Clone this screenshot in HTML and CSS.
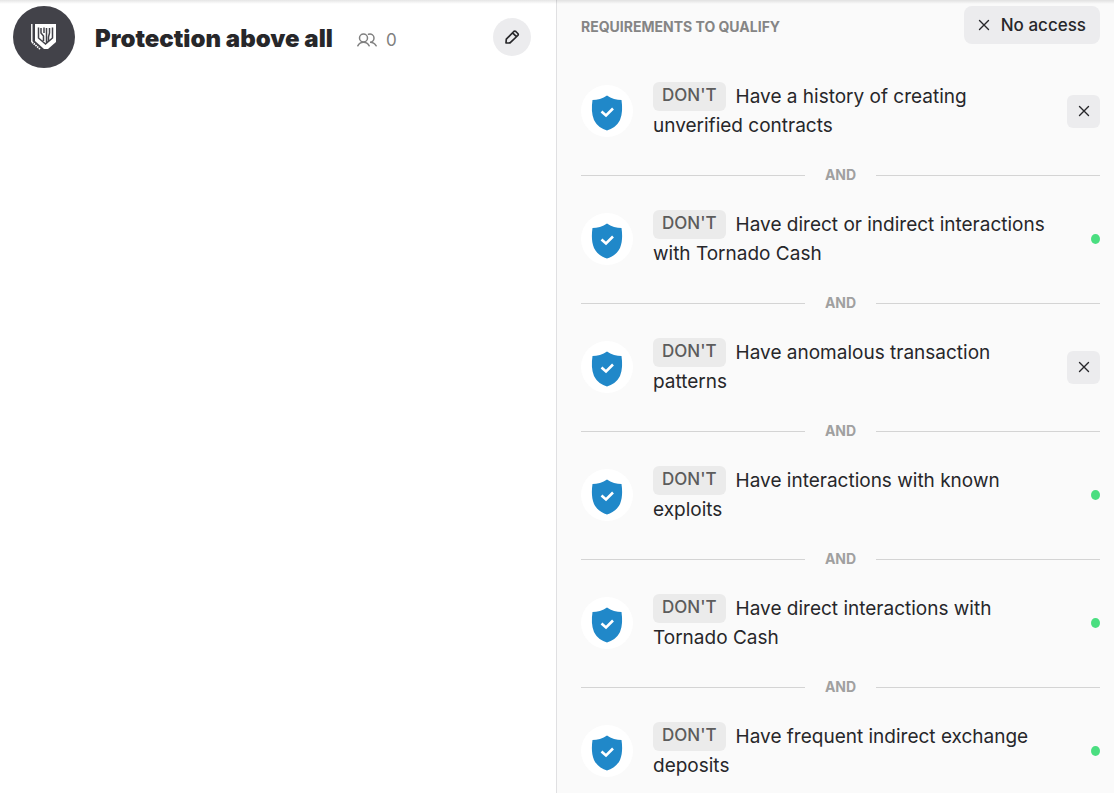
FILE: index.html
```html
<!DOCTYPE html>
<html lang="en">
<head>
  <meta charset="utf-8">
  <title>Protection above all</title>
  <link rel="stylesheet" href="styles.css">
</head>
<body>
  <!-- shared icons -->
  <svg class="sprite" aria-hidden="true">
    <symbol id="shield" viewBox="0 0 32 36">
      <path fill="#2088c9" d="M16 0.5 C20 3.5 26 5 30.5 5 C31.5 12 31.5 19 29 25 C26 31 21 34 16 35.5 C11 34 6 31 3 25 C0.5 19 0.5 12 1.5 5 C6 5 12 3.5 16 0.5 Z"/>
      <path fill="none" stroke="#fff" stroke-width="2.6" d="M10.5 16.5 L15 20.5 L22 13.5"/>
    </symbol>
    <symbol id="cross" viewBox="0 0 12 12">
      <path fill="none" stroke="currentColor" stroke-width="1.4" stroke-linecap="round" d="M1.5 1.5 L10.5 10.5 M10.5 1.5 L1.5 10.5"/>
    </symbol>
  </svg>

  <div class="page">
    <main class="role">
      <div class="logo">
        <svg width="26" height="26" viewBox="0 0 26 26" aria-hidden="true">
          <path fill="#fff" d="M4 0 H25 V18 L17 25 H13 L4 17 Z"/>
          <path fill="none" stroke="#fff" stroke-width="1.4" d="M0.8 0 V18"/>
          <path fill="none" stroke="#fff" stroke-width="1.8" stroke-dasharray="1.5 0.8" d="M1 18 L9 25"/>
          <path fill="none" stroke="#424249" stroke-width="0.8" d="M3 0 V18 L11 25"/>
          <path fill="none" stroke="#424249" stroke-width="1.5" d="M7.5 3.5 V14 L14.5 20 L21.5 14 V3.5 M10 4 V9 L12.5 12 V17 M13 3.5 V9 M15.5 4 V19 M18.5 4 V9 L17.5 13 V17"/>
        </svg>
      </div>
      <h1>Protection above all</h1>
      <div class="members">
        <svg width="20" height="14" viewBox="0 0 20 14" fill="none" stroke="currentColor" stroke-width="1.5" stroke-linecap="round" aria-hidden="true">
          <circle cx="6.5" cy="5" r="4"/>
          <path d="M0.8 12.8 C2 10.5 4 9.2 6.5 9.2 C9 9.2 11 10.5 12.2 12.8"/>
          <path d="M11.5 1.3 C14.5 0.3 17 2.3 17 5 C17 7.3 15.2 9.2 13 9.2 C15.5 9.2 17.8 10.5 19.2 12.8"/>
        </svg>
        <span>0</span>
      </div>
      <button class="edit" type="button" aria-label="Edit role">
        <svg width="16" height="16" viewBox="0 0 16 16" fill="none" stroke="currentColor" stroke-width="1.7" stroke-linejoin="round" aria-hidden="true">
          <path d="M2 14 L2.3 10.2 L9.8 2.5 Q10.8 1.6 11.8 2.5 L13.8 4.5 Q14.7 5.5 13.8 6.5 L6 13.8 Z M8.6 3.8 L12.4 7.7"/>
        </svg>
      </button>
    </main>

    <section class="requirements">
      <header>
        <h2>REQUIREMENTS TO QUALIFY</h2>
        <button class="access" type="button">
          <svg width="12" height="12" aria-hidden="true"><use href="#cross"/></svg>
          No access
        </button>
      </header>

      <div class="requirement">
        <div class="icon"><svg width="32" height="36"><use href="#shield"/></svg></div>
        <p><span class="badge">DON'T</span>Have a history of creating unverified contracts</p>
        <div class="status"><button type="button" aria-label="Not satisfied"><svg width="12" height="12"><use href="#cross"/></svg></button></div>
      </div>
      <div class="divider">AND</div>

      <div class="requirement">
        <div class="icon"><svg width="32" height="36"><use href="#shield"/></svg></div>
        <p><span class="badge">DON'T</span>Have direct or indirect interactions with Tornado Cash</p>
        <div class="status"><span class="dot"></span></div>
      </div>
      <div class="divider">AND</div>

      <div class="requirement">
        <div class="icon"><svg width="32" height="36"><use href="#shield"/></svg></div>
        <p><span class="badge">DON'T</span>Have anomalous transaction patterns</p>
        <div class="status"><button type="button" aria-label="Not satisfied"><svg width="12" height="12"><use href="#cross"/></svg></button></div>
      </div>
      <div class="divider">AND</div>

      <div class="requirement">
        <div class="icon"><svg width="32" height="36"><use href="#shield"/></svg></div>
        <p><span class="badge">DON'T</span>Have interactions with known exploits</p>
        <div class="status"><span class="dot"></span></div>
      </div>
      <div class="divider">AND</div>

      <div class="requirement">
        <div class="icon"><svg width="32" height="36"><use href="#shield"/></svg></div>
        <p><span class="badge">DON'T</span>Have direct interactions with Tornado Cash</p>
        <div class="status"><span class="dot"></span></div>
      </div>
      <div class="divider">AND</div>

      <div class="requirement">
        <div class="icon"><svg width="32" height="36"><use href="#shield"/></svg></div>
        <p><span class="badge">DON'T</span>Have frequent indirect exchange deposits</p>
        <div class="status"><span class="dot"></span></div>
      </div>
    </section>
  </div>
</body>
</html>
```
FILE: styles.css
```css
* {
  box-sizing: border-box;
}

body {
  margin: 0;
  background: #fff;
  color: #27272a;
  font-family: Inter, sans-serif;
}

h1, h2, p {
  margin: 0;
}

button {
  display: flex;
  align-items: center;
  justify-content: center;
  padding: 0;
  border: none;
  background: #ececee;
  color: #27272a;
  font-family: inherit;
  cursor: pointer;
}

.sprite {
  position: absolute;
  width: 0;
  height: 0;
}

.page {
  position: relative;
  display: grid;
  grid-template-columns: 1fr 1fr;
  min-height: 100vh;
}

/* shadow of the card edge above */
.page::before {
  content: "";
  position: absolute;
  top: 0;
  left: 0;
  right: 0;
  height: 4px;
  background: linear-gradient(rgba(0, 0, 0, 0.1), rgba(0, 0, 0, 0));
}

.role {
  display: flex;
  align-items: flex-start;
  padding: 6px 25px 0 13px;
  border-right: 1px solid #e0e0e2;
}

.logo {
  display: flex;
  align-items: center;
  justify-content: center;
  width: 62px;
  height: 62px;
  margin-right: 20px;
  border-radius: 50%;
  background: #424249;
}

h1 {
  font-size: 24px;
  font-weight: 900;
  line-height: 66px;
  white-space: nowrap;
}

.members {
  display: flex;
  align-items: center;
  gap: 9px;
  height: 68px;
  margin-left: 24px;
  color: #808080;
  font-size: 17px;
}

.edit {
  width: 38px;
  height: 38px;
  margin-top: 12px;
  margin-left: auto;
  border-radius: 50%;
}

.requirements {
  padding: 6px 14px 16px 24px;
  background: #fafafa;
}

header {
  display: flex;
  align-items: center;
  justify-content: space-between;
  margin-bottom: 38px;
}

h2 {
  padding-top: 4px;
  color: #858585;
  font-size: 14px;
  font-weight: 700;
  line-height: 20px;
}

.access {
  gap: 11px;
  height: 38px;
  padding: 0 14px;
  border-radius: 8px;
  font-size: 17px;
  font-weight: 500;
}

.requirement {
  display: flex;
  align-items: center;
}

.icon {
  display: flex;
  flex: none;
  align-items: center;
  justify-content: center;
  width: 52px;
  height: 52px;
  margin-right: 20px;
  padding-top: 4px;
  border-radius: 50%;
  background: #fff;
}

.requirement p {
  flex: 1;
  font-size: 19px;
  line-height: 29px;
}

.badge {
  display: inline-block;
  height: 29px;
  margin-right: 10px;
  padding: 0 9px;
  border-radius: 6px;
  background: #ebebeb;
  color: #5c5c5c;
  font-size: 17px;
  font-weight: 500;
  line-height: 27px;
  vertical-align: top;
}

.status {
  display: flex;
  flex: none;
  justify-content: flex-end;
  width: 33px;
  margin-left: 12px;
}

.status button {
  width: 33px;
  height: 33px;
  border-radius: 6px;
}

.dot {
  width: 9px;
  height: 10px;
  border-radius: 50%;
  background: #4ade80;
}

.divider {
  display: flex;
  align-items: center;
  gap: 20px;
  margin: 25px 0;
  color: #a0a0a0;
  font-size: 14px;
  font-weight: 700;
  line-height: 20px;
}

.divider::before,
.divider::after {
  content: "";
  flex: 1;
  height: 1px;
  background: #d4d4d4;
}
```
